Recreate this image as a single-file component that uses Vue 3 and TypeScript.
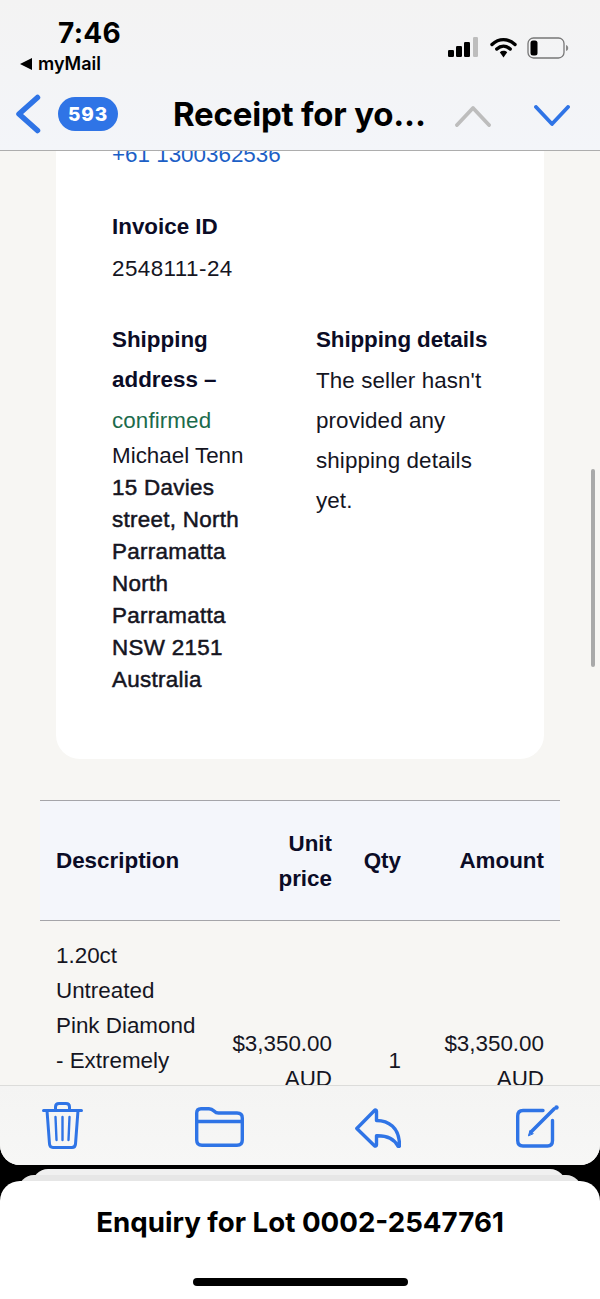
<script setup lang="ts">
interface Line { text: string; bold?: boolean }
const address: Line[] = [
  { text: 'Michael Tenn' },
  { text: '15 Davies', bold: true },
  { text: 'street, North', bold: true },
  { text: 'Parramatta', bold: true },
  { text: 'North', bold: true },
  { text: 'Parramatta', bold: true },
  { text: 'NSW 2151', bold: true },
  { text: 'Australia', bold: true },
]
const details: string[] = ["The seller hasn't", 'provided any', 'shipping details', 'yet.']
const description: string[] = ['1.20ct', 'Untreated', 'Pink Diamond', '- Extremely']
</script>

<template>
  <div class="phone">
    <div class="mail">
      <header class="top">
        <div class="status">
          <div class="clock">
            <div class="time">7:46</div>
            <div class="carrier"><span class="tri"></span>myMail</div>
          </div>
          <div class="sys">
            <svg width="32" height="20" viewBox="0 0 32 20">
              <rect x="0" y="13" width="6" height="7" rx="1.2" fill="#000" />
              <rect x="8" y="9" width="6" height="11" rx="1.2" fill="#000" />
              <rect x="16" y="5" width="6" height="15" rx="1.2" fill="#000" />
              <rect x="25" y="0" width="5" height="20" rx="1.2" fill="#bdbdbd" />
            </svg>
            <svg width="27" height="21" viewBox="0 0 27 21">
              <path d="M2 7.5C9 1 18 1 25 7.5" fill="none" stroke="#000" stroke-width="3.4" stroke-linecap="round" />
              <path d="M6.8 12C10.800 8.400 16.200 8.400 20.200 12" fill="none" stroke="#000" stroke-width="3.400" stroke-linecap="round" />
              <path d="M9.800 15.200L13.500 20.500L17.200 15.200C15 13.300 12 13.300 9.800 15.200Z" fill="#000" />
            </svg>
            <svg width="42" height="22" viewBox="0 0 42 22">
              <rect x="1" y="1" width="36" height="20" rx="5.500" fill="none" stroke="#777" stroke-width="1.300" />
              <rect x="3.500" y="3.500" width="7" height="15" rx="2.500" fill="#000" />
              <path d="M39 8C40.500 8.500 41.200 9.500 41.200 11C41.200 12.500 40.500 13.500 39 14Z" fill="#888" />
            </svg>
          </div>
        </div>
        <div class="nav">
          <svg class="back" width="26" height="40" viewBox="0 0 26 40">
            <path d="M22.500 3.500L4 20L22.500 36.500" fill="none" stroke="#2f74e6" stroke-width="5.500" stroke-linecap="round" stroke-linejoin="round" />
          </svg>
          <span class="badge">593</span>
          <h1 class="title">Receipt for yo...</h1>
          <svg class="up" width="36" height="22" viewBox="0 0 36 22">
            <path d="M2 20L18 3L34 20" fill="none" stroke="#bdbdbd" stroke-width="3.800" stroke-linecap="round" stroke-linejoin="round" />
          </svg>
          <svg class="down" width="36" height="22" viewBox="0 0 36 22">
            <path d="M2 2L18 19L34 2" fill="none" stroke="#2f74e6" stroke-width="3.800" stroke-linecap="round" stroke-linejoin="round" />
          </svg>
        </div>
      </header>

      <main class="scroll">
        <div class="content">
          <section class="card">
            <a class="phone-link">+61 1300362536</a>
            <div class="invoice">
              <div class="head">Invoice ID</div>
              <div class="val val-id">2548111-24</div>
            </div>
            <div class="columns">
              <div class="col-left">
                <div class="head">Shipping</div>
                <div class="head">address –</div>
                <div class="green">confirmed</div>
                <div v-for="(l, i) in address" :key="i" class="addr" :class="{ strong: l.bold }">{{ l.text }}</div>
              </div>
              <div class="col-right">
                <div class="head">Shipping details</div>
                <div class="detail-lines">
                  <div v-for="d in details" :key="d" class="val">{{ d }}</div>
                </div>
              </div>
            </div>
          </section>

          <section class="table">
            <div class="thead">
              <div>Description</div>
              <div class="r">Unit<br />price</div>
              <div class="r">Qty</div>
              <div class="r">Amount</div>
            </div>
            <div class="tbody">
              <div class="desc">
                <div v-for="d in description" :key="d">{{ d }}</div>
              </div>
              <div class="r">$3,350.00<br />AUD</div>
              <div class="r">1</div>
              <div class="r">$3,350.00<br />AUD</div>
            </div>
          </section>
        </div>
        <div class="bar"></div>
      </main>

      <footer class="tools">
        <svg class="ic-trash" width="41" height="47" viewBox="0 0 41 47" fill="none" stroke="#2f74e6" stroke-width="3" stroke-linecap="round" stroke-linejoin="round">
          <path d="M1.500 8.500H39.500" />
          <path d="M5 8.500L7.500 42C7.700 44.300 9 45.500 11 45.500H30C32 45.500 33.300 44.300 33.500 42L36 8.500" />
          <path d="M13.500 8V5C13.500 2.800 14.800 1.500 17 1.500H24C26.200 1.500 27.500 2.800 27.500 5V8" />
          <path d="M13.500 15L14.500 38M20.500 15V38M27.500 15L26.500 38" stroke-width="2.400" />
        </svg>
        <svg class="ic-folder" width="49" height="40" viewBox="0 0 49 40" fill="none" stroke="#2f74e6" stroke-width="3.400" stroke-linejoin="round">
          <path d="M1.700 6C1.700 3 3 1.700 6 1.700H14C16.500 1.700 17.500 2.500 19 4C20.500 5.500 21.500 6 23.500 6H42C45.500 6 47.300 8 47.300 11V33C47.300 36.500 45.500 38.300 42 38.300H7C3.500 38.300 1.700 36.500 1.700 33Z" />
          <path d="M1.700 14.500H47.300" />
        </svg>
        <svg class="ic-reply" width="46" height="40" viewBox="0 0 46 40" fill="none" stroke="#2f74e6" stroke-width="3.400" stroke-linejoin="round" stroke-linecap="round">
          <path d="M1.800 20.500L19.500 2.500C20.300 1.700 21.500 2.200 21.500 3.300V12.500C33 12.500 44.500 19 44.500 37.500C44.500 38.700 43.300 38.800 42.700 37.800C39 30.800 32 27.500 21.500 27.800V36.800C21.500 38 20.300 38.500 19.500 37.700Z" />
        </svg>
        <svg class="ic-compose" width="43" height="43" viewBox="0 0 43 43" fill="none" stroke="#2f74e6" stroke-width="3.400" stroke-linecap="round" stroke-linejoin="round">
          <path d="M27 5.500H7C3.500 5.500 1.700 7.500 1.700 11V35.500C1.700 39 3.500 41 7 41H31.500C35 41 36.500 39 36.500 35.500V15.500" />
          <path d="M15 27L38 4" stroke-width="3.600" />
          <path d="M12.500 30.500L14 25.500L17 28.500Z" fill="#2f74e6" stroke-width="1" />
          <circle cx="40.500" cy="2.500" r="2.200" fill="#2f74e6" stroke="none" />
        </svg>
      </footer>
    </div>

    <div class="stack">
      <div class="peek peek-back"></div>
      <div class="peek peek-mid"></div>
      <div class="sheet">
        <div class="sheet-title">Enquiry for Lot 0002-2547761</div>
        <div class="home"></div>
      </div>
    </div>
  </div>
</template>

<style scoped>
.phone {
  width: 600px;
  height: 1299px;
  background: #000;
  overflow: hidden;
  display: flex;
  flex-direction: column;
  font-family: "Liberation Sans", Arial, sans-serif;
}
.mail {
  height: 1165px;
  flex: none;
  display: flex;
  flex-direction: column;
  border-radius: 0 0 20px 20px;
  overflow: hidden;
  background: #f7f6f3;
}
.top {
  height: 151px;
  flex: none;
  box-sizing: border-box;
  background: linear-gradient(#f3f3f3, #f3f5f9);
  border-bottom: 1px solid #adadad;
  font-family: Inter, "Liberation Sans", sans-serif;
  color: #000;
}
.status {
  height: 89px;
  display: flex;
  justify-content: space-between;
}
.clock {
  padding: 18px 0 0 20px;
}
.time {
  margin-left: 38px;
  font-size: 28px;
  line-height: 30px;
  font-weight: 700;
  letter-spacing: 0.3px;
}
.carrier {
  margin-top: 4px;
  display: flex;
  align-items: center;
  font-size: 18px;
  line-height: 24px;
  font-weight: 600;
}
.tri {
  width: 0;
  height: 0;
  margin-right: 6px;
  border-style: solid;
  border-width: 6px 12px 6px 0;
  border-color: transparent #000 transparent transparent;
}
.sys {
  display: flex;
  align-items: flex-start;
  gap: 10px;
  padding: 37px 31px 0 0;
}
.nav {
  height: 56px;
  display: flex;
  align-items: center;
  padding-bottom: 6px;
  box-sizing: border-box;
}
.back {
  margin-left: 15px;
}
.badge {
  margin-left: 17px;
  width: 60px;
  height: 34px;
  border-radius: 17px;
  background: #2f74e6;
  color: #fff;
  font-size: 19px;
  font-weight: 800;
  letter-spacing: 0.8px;
  display: flex;
  align-items: center;
  justify-content: center;
}
.title {
  margin: 0 0 0 55px;
  width: 254px;
  flex: none;
  font-size: 33px;
  line-height: 40px;
  font-weight: 700;
  letter-spacing: -0.2px;
  white-space: nowrap;
}
.up {
  margin-left: 28px;
  margin-top: 4px;
}
.down {
  margin-left: 43px;
  margin-top: 4px;
}
.scroll {
  flex: 1;
  min-height: 0;
  overflow: hidden;
  position: relative;
}
.content {
  margin-top: -16px;
  font-size: 22.400px;
  color: #15151f;
}
.card {
  margin: 0 56px;
  padding: 0 0 63px 56px;
  background: #fff;
  border-radius: 0 0 24px 24px;
}
.phone-link {
  display: block;
  line-height: 40px;
  color: #1c5fc6;
}
.invoice {
  margin-top: 32px;
}
.head {
  line-height: 40px;
  font-weight: 700;
  color: #0b0c26;
}
.col-right .head {
  letter-spacing: -0.1px;
}
.val {
  line-height: 40px;
}
.val-id {
  margin-top: 2px;
  letter-spacing: 0.45px;
}
.detail-lines {
  margin-top: 1px;
  letter-spacing: 0.1px;
}
.columns {
  margin-top: 31px;
  display: flex;
}
.col-left {
  width: 204px;
  flex: none;
}
.green {
  margin-top: 1px;
  line-height: 40px;
  letter-spacing: 0.1px;
  color: #1b6b4c;
}
.addr {
  line-height: 32px;
}
.green + .addr {
  margin-top: -1px;
}
.strong {
  letter-spacing: 0.3px;
  -webkit-text-stroke: 0.5px currentColor;
}
.table {
  margin: 41px 40px 0;
}
.thead,
.tbody {
  display: grid;
  grid-template-columns: 176px 100px 69px 143px;
  padding: 0 16px;
  align-items: center;
  line-height: 35px;
}
.thead {
  height: 121px;
  box-sizing: border-box;
  background: #f4f6fb;
  border-top: 1.500px solid #a5a5a9;
  border-bottom: 1.500px solid #a5a5a9;
  font-weight: 700;
  color: #0b0c26;
}
.tbody {
  margin-top: 17px;
  height: 245px;
}
.desc {
  align-self: start;
}
.r {
  text-align: right;
}
.bar {
  position: absolute;
  right: 5px;
  top: 318px;
  width: 4px;
  height: 198px;
  border-radius: 2px;
  background: #a9a9a9;
}
.tools {
  height: 80px;
  flex: none;
  box-sizing: border-box;
  border-top: 1px solid #dcdcda;
  background: linear-gradient(#f4f4f3, #f7f7f6);
  position: relative;
  z-index: 1;
  display: flex;
  align-items: flex-start;
  padding-left: 42px;
}
.ic-trash { margin-top: 16px; }
.ic-folder { margin-top: 21px; margin-left: 112px; }
.ic-reply { margin-top: 22px; margin-left: 111px; }
.ic-compose { margin-top: 19px; margin-left: 115px; }
.stack {
  flex: 1;
  min-height: 0;
  position: relative;
}
.peek {
  background: #ececec;
  height: 26px;
  border-radius: 16px 16px 0 0;
}
.peek-back {
  margin: 4px 34px 0 32px;
  background: #f0f0f0;
}
.peek-mid {
  margin: -20px 18px 0;
  background: #e6e6e6;
}
.sheet {
  margin-top: -20px;
  height: 130px;
  background: #fff;
  border-radius: 20px 20px 0 0;
  display: flex;
  flex-direction: column;
  align-items: center;
}
.sheet-title {
  margin-top: 24px;
  font-family: Inter, "Liberation Sans", sans-serif;
  font-size: 27.700px;
  line-height: 34px;
  font-weight: 700;
  color: #000;
  white-space: nowrap;
}
.home {
  margin-top: 39px;
  width: 215px;
  height: 8px;
  border-radius: 4px;
  background: #000;
}
</style>
